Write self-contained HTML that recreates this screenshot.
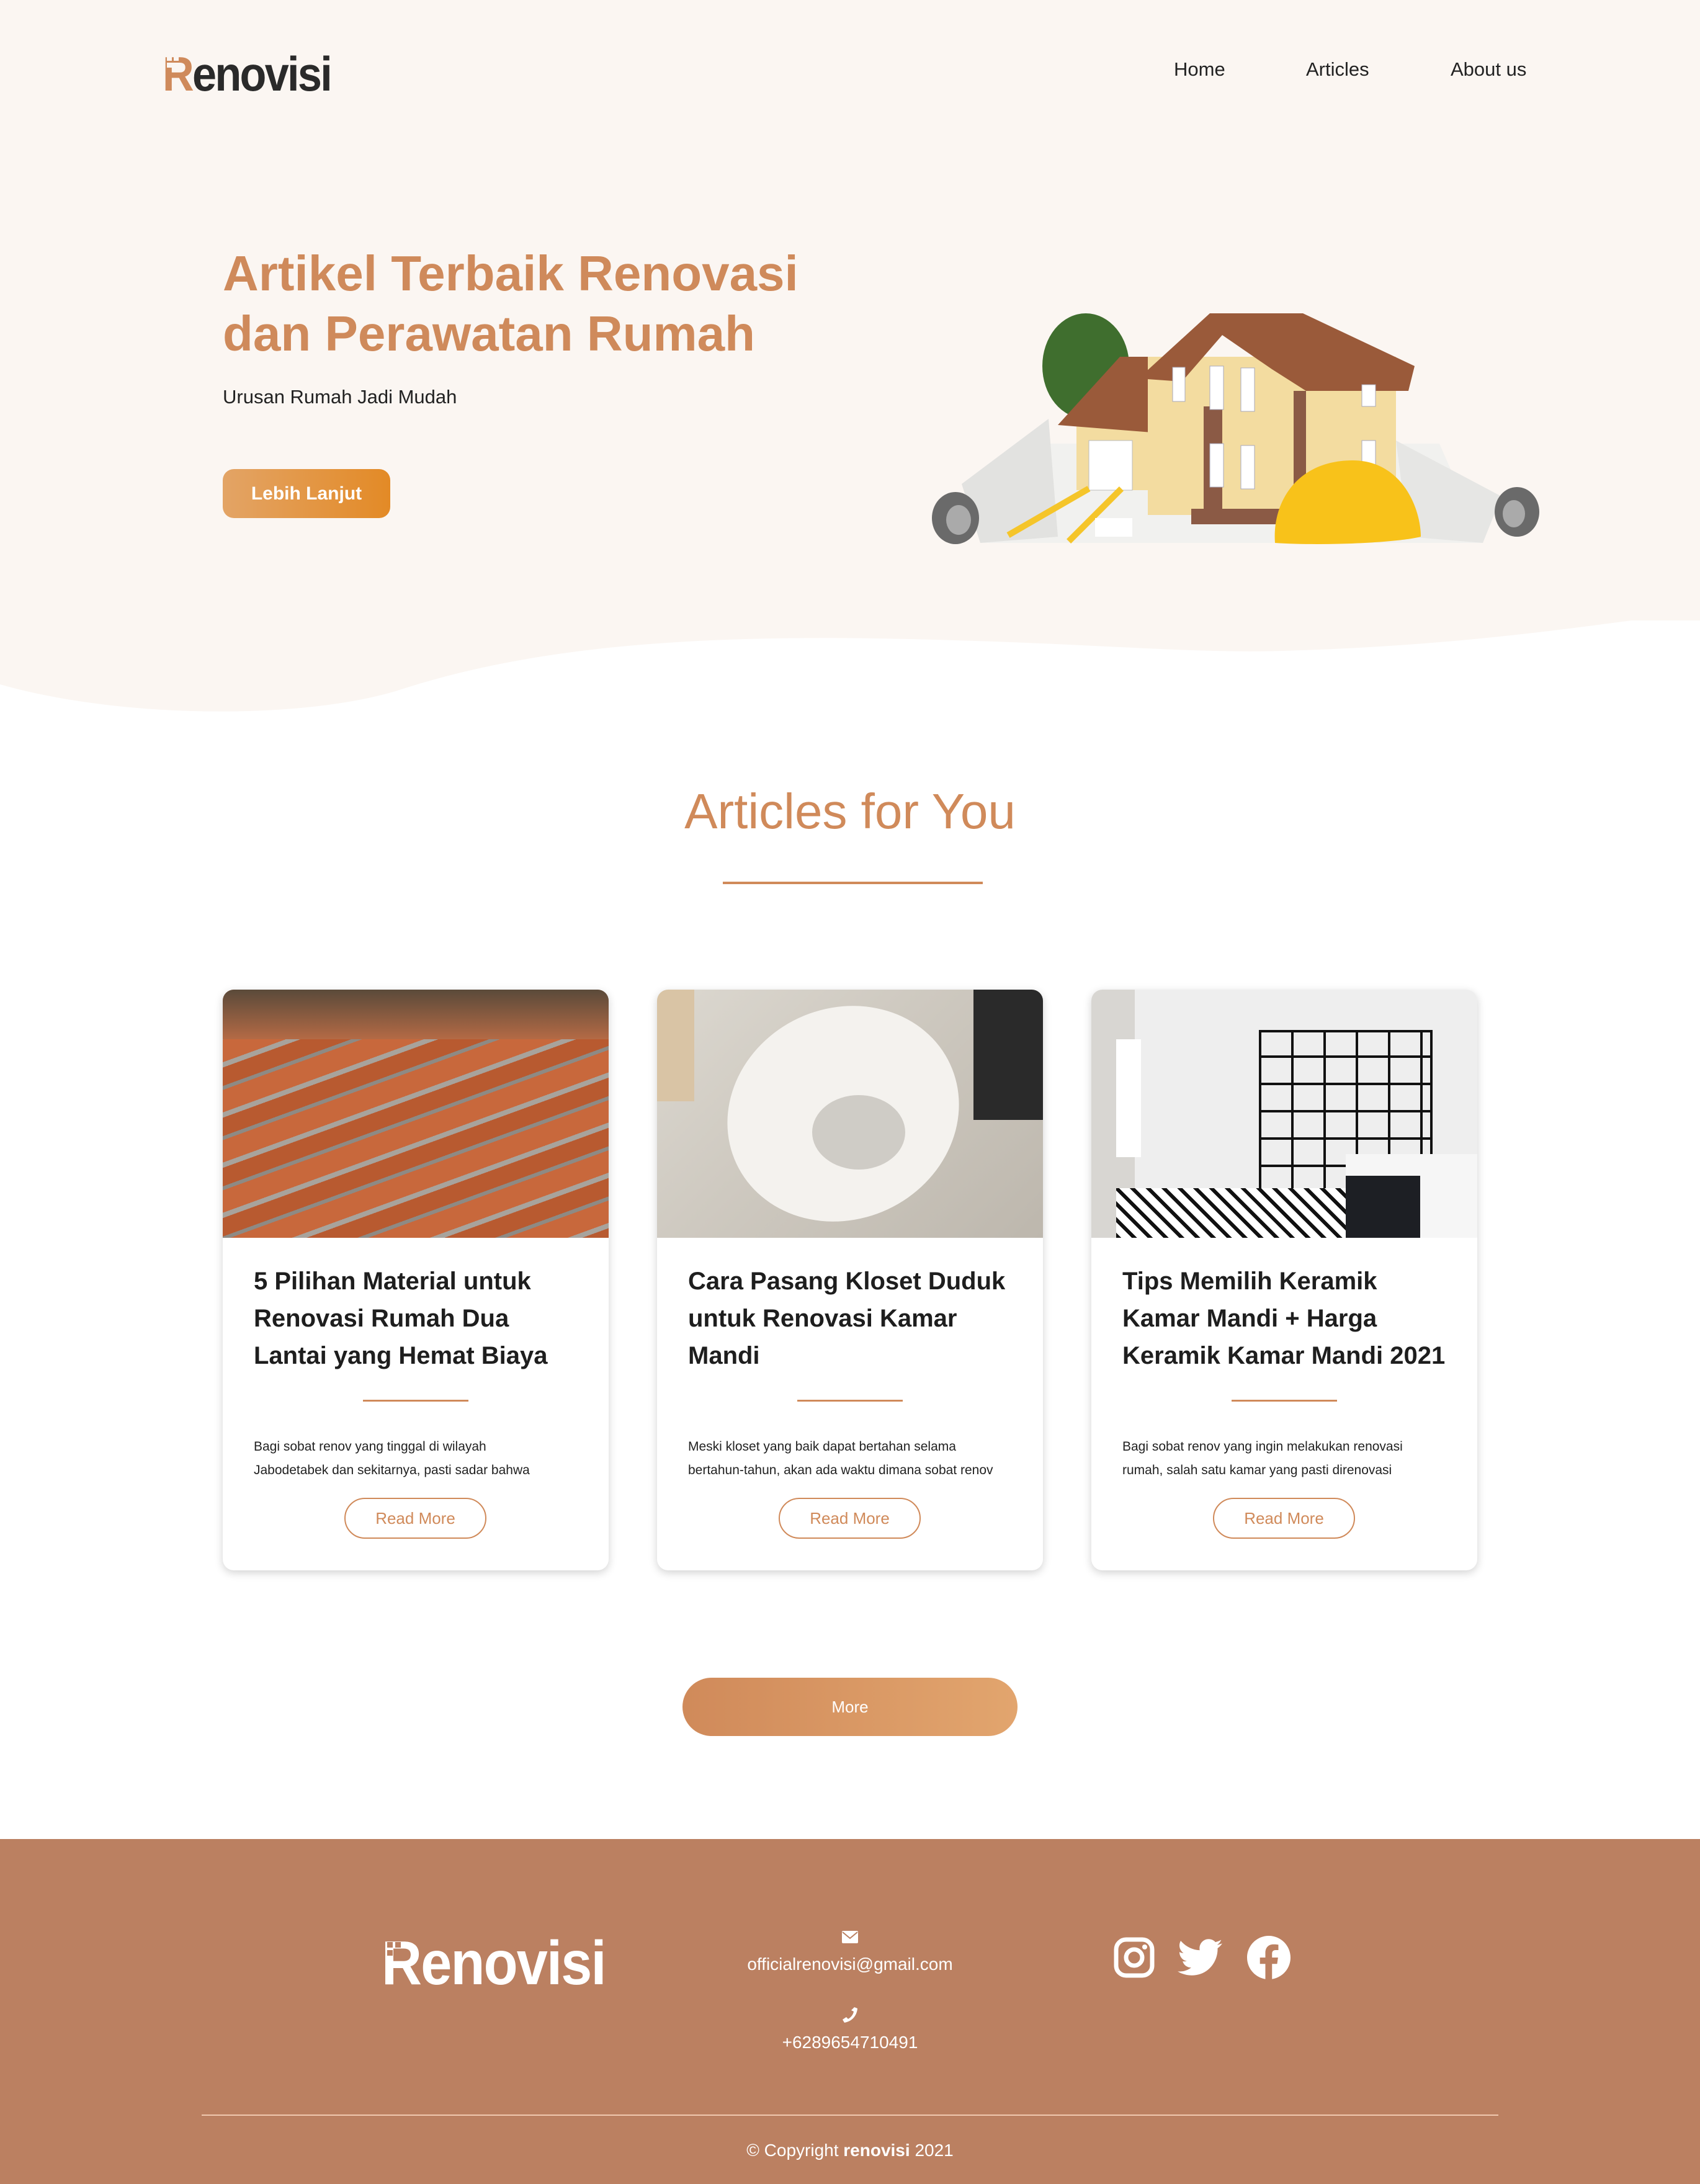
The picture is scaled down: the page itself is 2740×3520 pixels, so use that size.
<!DOCTYPE html>
<html><head><meta charset="utf-8">
<style>
*{margin:0;padding:0;box-sizing:border-box}
body{width:2740px;height:3520px;position:relative;background:#fff;font-family:"Liberation Sans",sans-serif;overflow:hidden}
.abs{position:absolute}
.logo{font-weight:bold;font-size:78px;letter-spacing:-3px;transform:scaleX(0.9);transform-origin:left top;line-height:1}
.nav{font-size:31px;color:#222;top:94px}
h1{position:absolute;left:359px;top:392px;font-size:80px;line-height:97px;color:#cf8a5b;font-weight:bold}
.card{position:absolute;top:1595px;width:622px;height:936px;background:#fff;border-radius:18px;box-shadow:0 4px 14px rgba(0,0,0,.18);overflow:hidden}
.card .img{height:400px;position:relative;overflow:hidden}
.card h3{position:absolute;left:50px;top:440px;width:540px;font-size:40px;line-height:60px;color:#1e1e1e;font-weight:bold}
.card .dv{position:absolute;left:226px;top:661px;width:170px;height:3px;background:#d08a5a}
.card p{position:absolute;left:50px;top:718px;font-size:21px;line-height:38px;color:#222;white-space:nowrap}
.card .rm{position:absolute;left:196px;top:819px;width:229px;height:66px;border:2px solid #d08a5a;border-radius:33px;color:#d08a5a;font-size:26px;text-align:center;line-height:62px}
</style></head><body>
<svg class="abs" style="left:0;top:0" width="2740" height="1200"><path d="M0,0 H2740 V1000 H2630 C2550,1010 2350,1040 2096,1048 C1950,1055 1800,1040 1572,1033 C1200,1020 900,1030 650,1110 C500,1160 200,1160 0,1103 Z" fill="#fbf6f2"/></svg>

<div class="abs logo" style="left:262px;top:80px"><span style="color:#cf8a5b">R</span><span style="color:#2a2a2a">enovisi</span></div>
<div class="abs" style="left:269px;top:90px;width:8px;height:8px;background:#fbf6f2;box-shadow:11px 0 #fbf6f2,0 11px #fbf6f2,11px 11px #fbf6f2"></div>
<div class="abs nav" style="left:1892px">Home</div>
<div class="abs nav" style="left:2105px">Articles</div>
<div class="abs nav" style="left:2338px">About us</div>

<h1>Artikel Terbaik Renovasi<br>dan Perawatan Rumah</h1>
<div class="abs" style="left:359px;top:622px;font-size:31px;color:#222">Urusan Rumah Jadi Mudah</div>
<div class="abs" style="left:359px;top:756px;width:270px;height:79px;border-radius:18px;background:linear-gradient(90deg,#e3a466,#e38a26);color:#fff;font-weight:bold;font-size:30px;text-align:center;line-height:79px">Lebih Lanjut</div>

<svg class="abs" style="left:1490px;top:480px" width="1000" height="420" viewBox="0 0 1000 420">
<polygon points="90,395 900,395 830,235 170,235" fill="#f1f1ef"/>
<polygon points="60,300 200,195 215,385 90,395" fill="#e2e2e0"/>
<polygon points="760,230 930,320 900,395 780,385" fill="#e6e6e4"/>
<ellipse cx="50" cy="355" rx="38" ry="42" fill="#6a6a6a"/><ellipse cx="55" cy="358" rx="20" ry="24" fill="#aaa"/>
<ellipse cx="955" cy="345" rx="36" ry="40" fill="#6a6a6a"/><ellipse cx="950" cy="348" rx="18" ry="22" fill="#aaa"/>
<ellipse cx="260" cy="110" rx="70" ry="85" fill="#3f6e2e"/>
<rect x="245" y="205" width="190" height="105" fill="#f3dca0"/>
<rect x="265" y="230" width="70" height="80" fill="#fff" stroke="#bbb"/>
<polygon points="215,205 315,95 430,95 430,222" fill="#9a5a3a"/>
<rect x="360" y="95" width="400" height="255" fill="#f3dca0"/>
<rect x="450" y="175" width="30" height="175" fill="#8b5a45"/>
<rect x="595" y="150" width="20" height="200" fill="#8b5a45"/>
<rect x="430" y="340" width="180" height="25" fill="#8b5a45"/>
<polygon points="345,130 460,25 610,25 790,110 780,150 615,150 560,115 480,60 415,135" fill="#9a5a3a"/>
<g fill="#fff" stroke="#aab"><rect x="400" y="112" width="20" height="55"/><rect x="460" y="110" width="22" height="70"/><rect x="510" y="113" width="22" height="70"/><rect x="460" y="235" width="22" height="70"/><rect x="510" y="238" width="22" height="70"/><rect x="705" y="140" width="22" height="35"/><rect x="705" y="230" width="22" height="40"/></g>
<path d="M565,395 C560,330 600,262 690,262 C770,262 800,340 800,385 C760,395 640,400 565,395Z" fill="#f8c21a"/>
<rect x="125" y="340" width="150" height="10" fill="#f5c52a" transform="rotate(-30 200 345)"/>
<rect x="215" y="345" width="120" height="10" fill="#f5c52a" transform="rotate(-45 275 350)"/>
<rect x="275" y="355" width="60" height="30" fill="#fff"/>
</svg>

<div class="abs" style="left:0;width:2740px;top:1262px;text-align:center;font-size:80px;color:#d08a5a">Articles for You</div>
<div class="abs" style="left:1165px;top:1421px;width:419px;height:4px;background:#d08a5a"></div>

<div class="card" style="left:359px"><div class="img" style="background:repeating-linear-gradient(160deg,#c8683c 0 34px,#a8a39c 34px 42px,#b85a30 42px 70px,#8e8a84 70px 76px);"><div style="position:absolute;left:0;top:0;width:622px;height:80px;background:linear-gradient(180deg,#5a4a3a,#b46a45)"></div></div>
<h3>5 Pilihan Material untuk Renovasi Rumah Dua Lantai yang Hemat Biaya</h3><div class="dv"></div>
<p>Bagi sobat renov yang tinggal di wilayah<br>Jabodetabek dan sekitarnya, pasti sadar bahwa</p><div class="rm">Read More</div></div>

<div class="card" style="left:1059px"><div class="img" style="background:linear-gradient(135deg,#dcd8d0,#cfcac1 40%,#bdb7ad)"><div style="position:absolute;left:110px;top:30px;width:380px;height:340px;border-radius:50%;background:#f4f2ee;transform:rotate(-25deg)"></div><div style="position:absolute;left:250px;top:170px;width:150px;height:120px;border-radius:50%;background:#cfccc6"></div><div style="position:absolute;left:510px;top:0;width:112px;height:210px;background:#2a2a2a"></div><div style="position:absolute;left:0;top:0;width:60px;height:180px;background:#d9c4a5"></div></div>
<h3>Cara Pasang Kloset Duduk untuk Renovasi Kamar Mandi</h3><div class="dv"></div>
<p>Meski kloset yang baik dapat bertahan selama<br>bertahun-tahun, akan ada waktu dimana sobat renov</p><div class="rm">Read More</div></div>

<div class="card" style="left:1759px"><div class="img" style="background:#eeeeee"><div style="position:absolute;left:0;top:0;width:70px;height:400px;background:#d8d6d2"></div>
<div style="position:absolute;left:270px;top:65px;width:280px;height:265px;border:4px solid #111;background:repeating-linear-gradient(90deg,transparent 0 48px,#111 48px 52px),repeating-linear-gradient(0deg,transparent 0 40px,#111 40px 44px)"></div>
<div style="position:absolute;left:40px;top:320px;width:420px;height:80px;background:repeating-linear-gradient(45deg,#111 0 6px,#fff 6px 18px),#fff"></div>
<div style="position:absolute;left:410px;top:265px;width:212px;height:135px;background:#f6f6f6"></div><div style="position:absolute;left:410px;top:300px;width:120px;height:100px;background:#1d1f24"></div>
<div style="position:absolute;left:40px;top:80px;width:40px;height:190px;background:#fff"></div></div>
<h3>Tips Memilih Keramik Kamar Mandi + Harga Keramik Kamar Mandi 2021</h3><div class="dv"></div>
<p>Bagi sobat renov yang ingin melakukan renovasi<br>rumah, salah satu kamar yang pasti direnovasi</p><div class="rm">Read More</div></div>

<div class="abs" style="left:1100px;top:2704px;width:540px;height:94px;border-radius:47px;background:linear-gradient(90deg,#d08a5a,#e2a56e);color:#fff;font-size:26px;text-align:center;line-height:94px">More</div>

<div class="abs" style="left:0;top:2964px;width:2740px;height:556px;background:#bb8061"></div>
<div class="abs logo" style="left:615px;top:3114px;font-size:100px;color:#fff;letter-spacing:-2px">Renovisi</div>
<div class="abs" style="left:624px;top:3130px;width:9px;height:9px;background:#bb8061;box-shadow:13px 0 #bb8061,0 13px #bb8061,13px 13px #bb8061"></div>
<svg class="abs" style="left:1357px;top:3112px" width="26" height="20" viewBox="0 0 26 20"><rect width="26" height="20" rx="2" fill="#fff"/><path d="M1,2 L13,12 L25,2" stroke="#bb8061" stroke-width="2" fill="none"/></svg>
<div class="abs" style="left:0;width:2740px;top:3150px;text-align:center;font-size:28px;color:#fff">officialrenovisi@gmail.com</div>
<svg class="abs" style="left:1357px;top:3233px" width="26" height="28" viewBox="0 0 26 28"><path d="M20,2 L25,4 C24,16 16,25 4,27 L1,22 L7,18 L10,21 C15,18 18,14 19,9 L15,7Z" fill="#fff"/></svg>
<div class="abs" style="left:0;width:2740px;top:3276px;text-align:center;font-size:28px;color:#fff">+6289654710491</div>

<svg class="abs" style="left:1795px;top:3122px" width="66" height="66" viewBox="0 0 66 66"><rect x="4" y="4" width="58" height="58" rx="16" fill="none" stroke="#fff" stroke-width="7"/><circle cx="33" cy="33" r="13" fill="none" stroke="#fff" stroke-width="7"/><circle cx="50" cy="16" r="4" fill="#fff"/></svg>
<svg class="abs" style="left:1898px;top:3124px" width="72" height="62" viewBox="0 0 24 20"><path d="M24,2.4c-.9.4-1.8.6-2.8.8 1-.6 1.8-1.6 2.2-2.7-1 .6-2 1-3.1 1.2C19.4.7 18.1.1 16.7.1c-2.7 0-4.9 2.2-4.9 4.9 0 .4 0 .8.1 1.1C7.8 5.9 4.2 4 1.7 1 1.3 1.7 1 2.6 1 3.5c0 1.7.9 3.2 2.2 4.1-.8 0-1.6-.2-2.2-.6v.1c0 2.4 1.7 4.4 3.9 4.8-.4.1-.8.2-1.3.2-.3 0-.6 0-.9-.1.6 2 2.4 3.4 4.6 3.4-1.7 1.3-3.8 2.1-6.1 2.1-.4 0-.8 0-1.2-.1 2.2 1.4 4.8 2.2 7.5 2.2 9.1 0 14-7.5 14-14v-.6c1-.7 1.8-1.6 2.5-2.6z" fill="#fff"/></svg>
<svg class="abs" style="left:2010px;top:3120px" width="70" height="70" viewBox="0 0 24 24"><path d="M24,12C24,5.4 18.6,0 12,0S0,5.4 0,12c0,6 4.4,11 10.1,11.9v-8.4H7.1V12h3V9.4c0-3 1.8-4.7 4.5-4.7 1.3 0 2.7.2 2.7.2v3h-1.5c-1.5 0-2 .9-2 1.9V12h3.3l-.5 3.5h-2.8v8.4C19.6,23 24,18 24,12z" fill="#fff"/></svg>

<div class="abs" style="left:325px;top:3408px;width:2090px;height:2px;background:#f0c9b0"></div>
<div class="abs" style="left:0;width:2740px;top:3450px;text-align:center;font-size:28px;color:#fff">© Copyright <b>renovisi</b> 2021</div>
</body></html>
